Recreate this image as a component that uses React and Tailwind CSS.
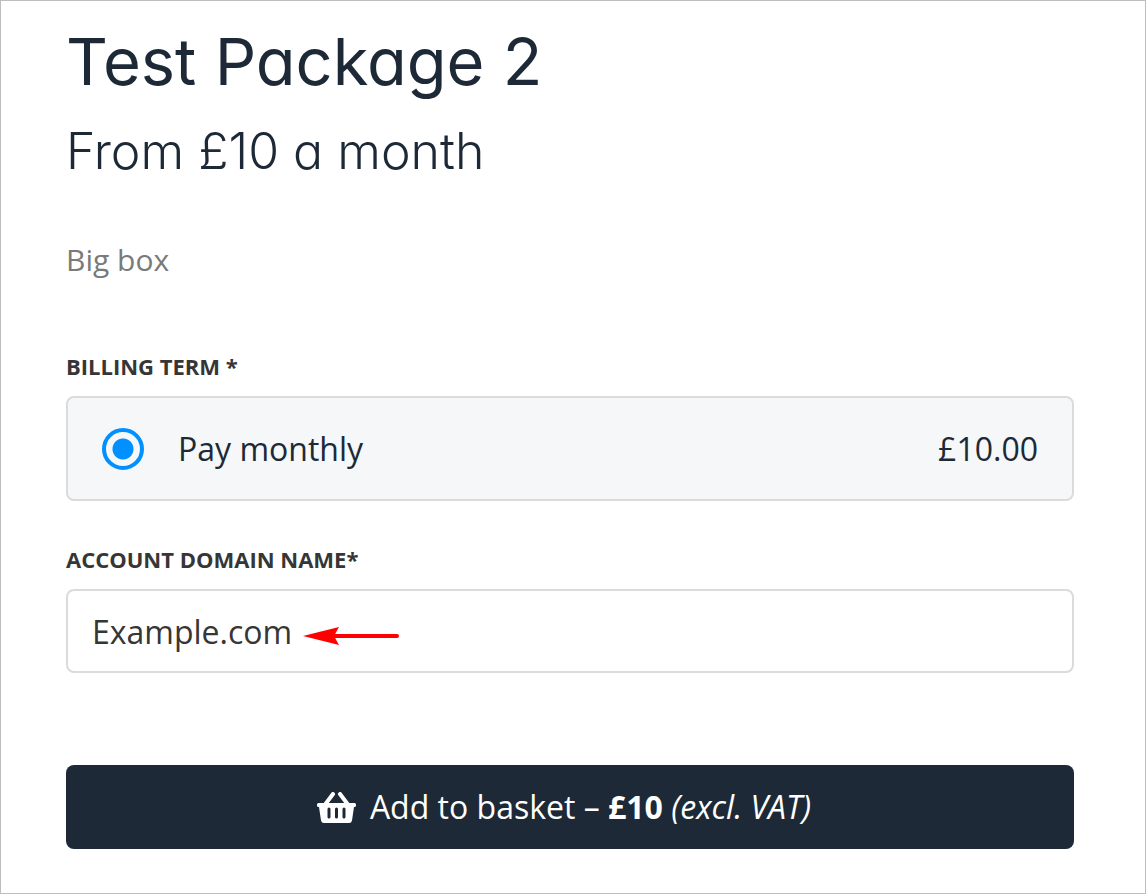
import { useState } from "react";

const Arrow = () => {
  return (
    <svg
      className="absolute left-[237px] top-[37px] w-24 h-5 pointer-events-none"
      viewBox="0 0 96 20"
      aria-hidden="true"
    >
      <path d="M0 10 L36 1 L31 10 L36 19 Z" fill="#ff0000" />
      <path
        d="M30 10 H94"
        stroke="#ff0000"
        strokeWidth="4"
        strokeLinecap="round"
      />
    </svg>
  );
};

const BasketIcon = ({ className }) => {
  return (
    <svg className={className} viewBox="0 0 39 31" aria-hidden="true">
      <path
        d="M16 2 L8.5 12 M23 2 L30.5 12"
        fill="none"
        stroke="currentColor"
        strokeWidth="4"
        strokeLinecap="round"
      />
      <path
        fill="currentColor"
        fillRule="evenodd"
        d="M1.5 11 H37.5 Q39 11 39 12.5 V13.5 Q39 15 37.5 15 H37 L35 28.5 Q34.5 31 32 31 H7 Q4.500 31 4 28.500 L2 15 H1.500 Q0 15 0 13.500 V12.500 Q0 11 1.500 11 Z M10.500 17 V25 Q10.500 26.500 12 26.500 T13.500 25 V17 Q13.500 15.500 12 15.500 T10.500 17 Z M18 17 V25 Q18 26.500 19.500 26.500 T21 25 V17 Q21 15.500 19.500 15.500 T18 17 Z M25.500 17 V25 Q25.500 26.500 27 26.500 T28.500 25 V17 Q28.500 15.500 27 15.500 T25.500 17 Z"
      />
    </svg>
  );
};

const App = () => {
  const [term, setTerm] = useState("monthly");
  const [domain, setDomain] = useState("Example.com");

  return (
    <main className="min-h-screen border border-[#bdbdbd] bg-white pl-[65px] pr-[71px] pt-5 pb-11 font-['Open_Sans','Noto_Sans',sans-serif]">
      <h1 className="font-['Inter',sans-serif] [font-feature-settings:'cv11'] text-[65px] leading-[82px] text-[#1d2936]">
        Test Package 2
      </h1>
      <h2 className="mt-4 font-['Inter',sans-serif] [font-feature-settings:'cv11'] font-light text-[50px] leading-[64px] text-[#1d2936]">
        From £10 a month
      </h2>

      <p className="mt-[53px] text-[30px] leading-[48px] text-[#7a7a7a]">
        Big box
      </p>

      <form onSubmit={(e) => e.preventDefault()}>
        <fieldset className="mt-[66px]">
          <legend className="text-[22px] leading-[32px] font-bold text-[#363636]">
            BILLING TERM *
          </legend>
          <label className="mt-3.5 flex items-center h-[105px] border-2 border-[#dbdbdb] rounded-lg bg-[#f5f7f9] px-[34px] text-[32px] text-[#1d2936]">
            <input
              type="radio"
              name="term"
              value="monthly"
              checked={term === "monthly"}
              onChange={(e) => setTerm(e.target.value)}
              className="appearance-none w-[42px] h-[42px] shrink-0 rounded-full border-4 border-[#0090ff] checked:bg-[radial-gradient(circle,#0090ff_10px,transparent_11px)]"
            />
            <span className="ml-[34px]">Pay monthly</span>
            <span className="ml-auto">£10.00</span>
          </label>
        </fieldset>

        <label
          htmlFor="domain"
          className="mt-[42px] block text-[22px] leading-[32px] font-bold text-[#363636]"
        >
          ACCOUNT DOMAIN NAME*
        </label>
        <div className="relative mt-3.5">
          <input
            id="domain"
            type="text"
            value={domain}
            onChange={(e) => setDomain(e.target.value)}
            className="block w-full h-[84px] border-2 border-[#dbdbdb] rounded-lg px-6 text-[32px] text-[#363636]"
          />
          <Arrow />
        </div>

        <button
          type="submit"
          className="mt-[92px] flex w-full h-[84px] items-center justify-center rounded-lg bg-[#1d2936] pr-3 text-[32px] text-white"
        >
          <BasketIcon className="mr-3.5 w-[39px] h-[31px]" />
          <span>
            Add to basket – <strong>£10</strong> <em>(excl. VAT)</em>
          </span>
        </button>
      </form>
    </main>
  );
};

export default App;
